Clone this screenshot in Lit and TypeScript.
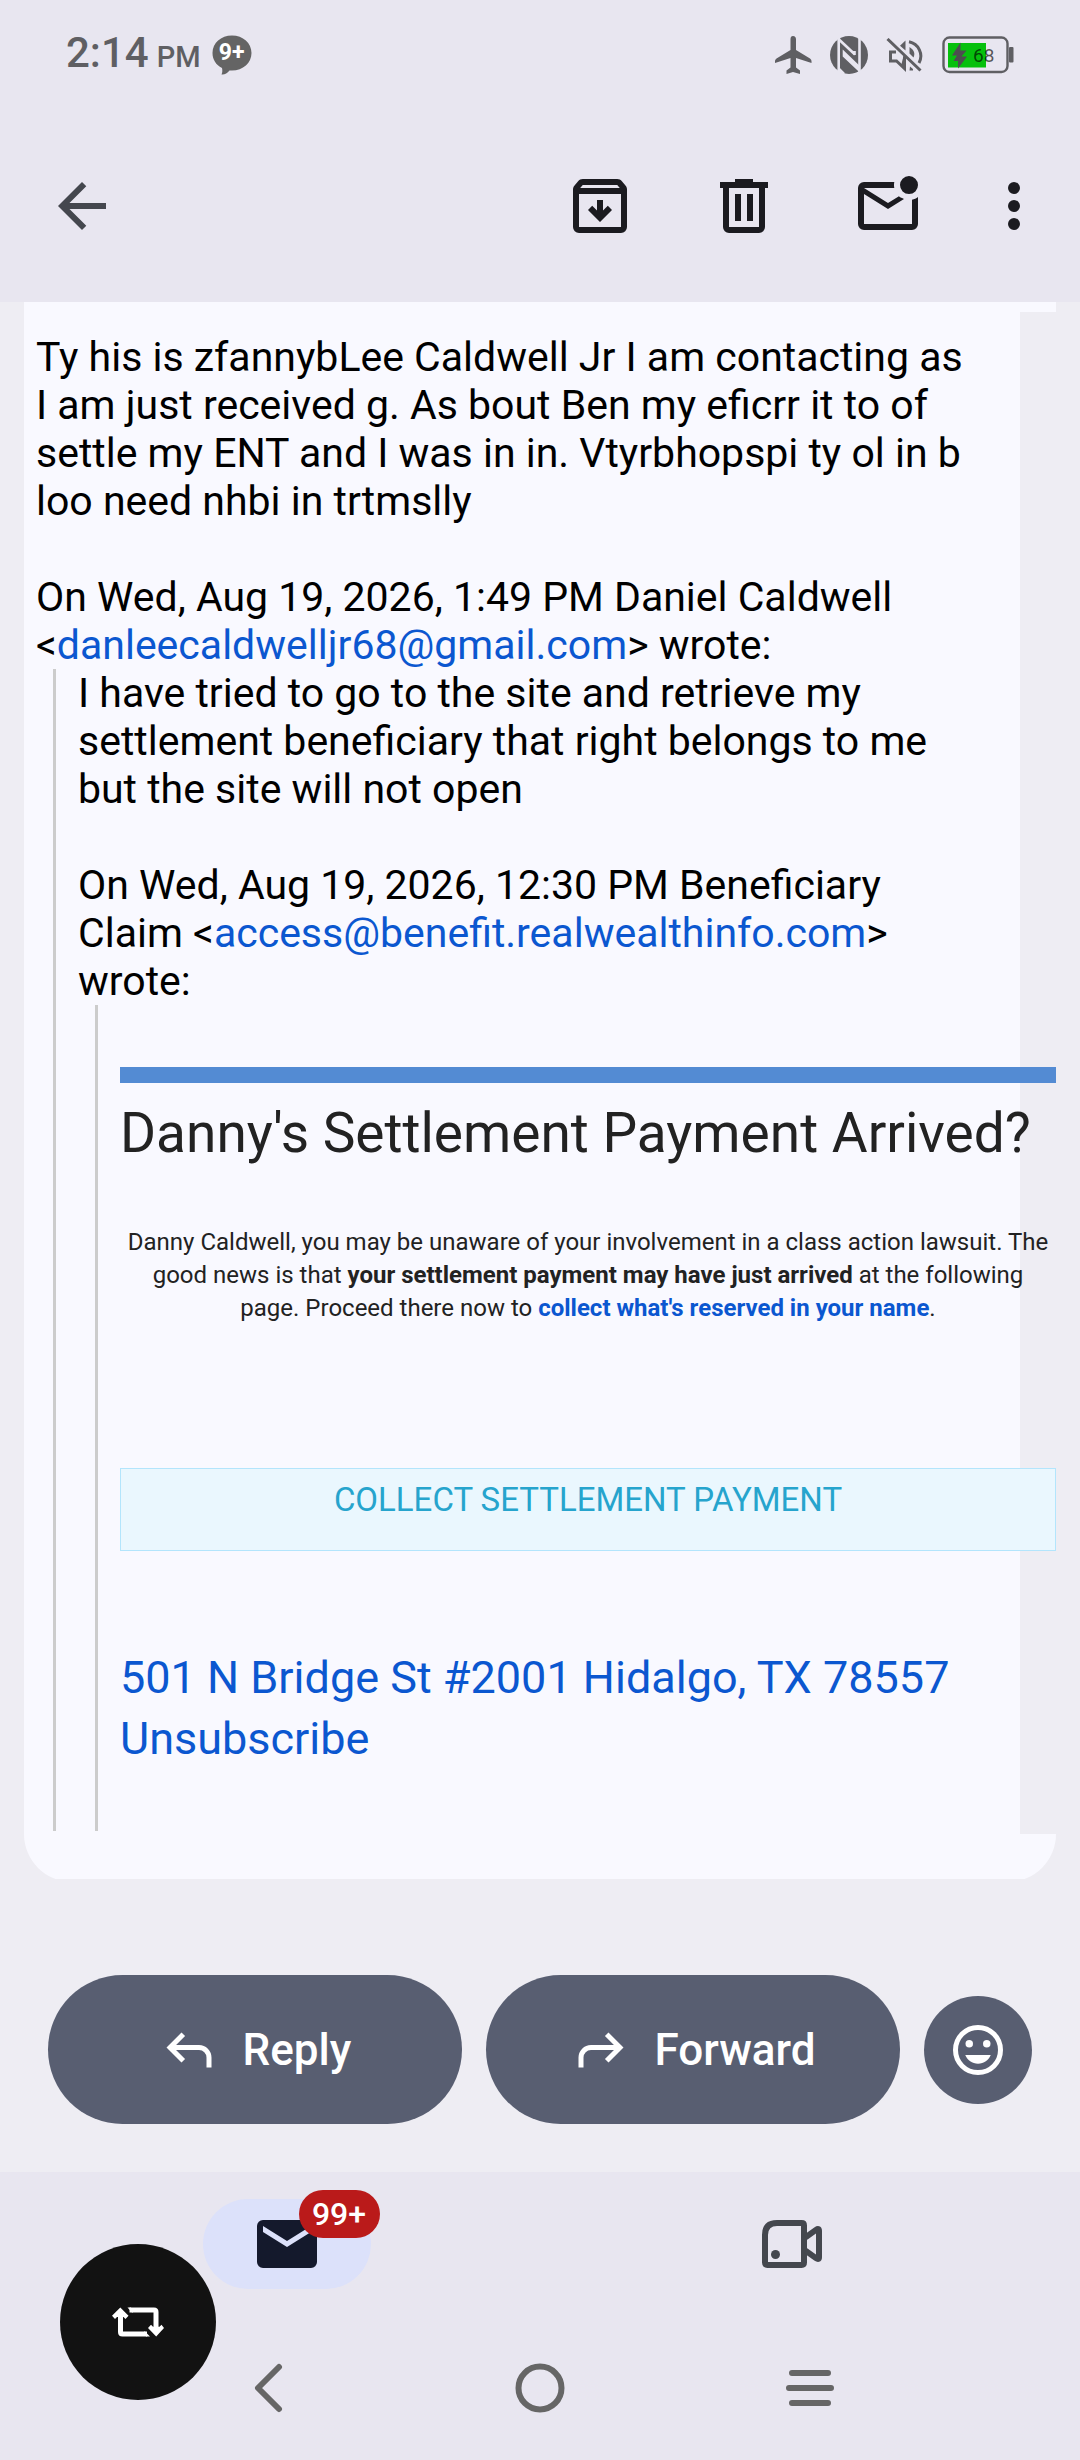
import { LitElement, html, css } from "lit";
import { customElement } from "lit/decorators.js";

const glyph = (d: string) => html`
  <svg viewBox="0 0 24 24" aria-hidden="true"><path d=${d}></path></svg>
`;

const PATHS = {
  back: "M7.825 13l5.6 5.6L12 20l-8-8 8-8 1.425 1.4-5.6 5.6H20v2Z",
  archive:
    "M12 17.3l4-4-1.4-1.4-1.6 1.6V10h-2v3.5l-1.6-1.6L8 13.3ZM5 8v11h14V8ZM5 21q-.825 0-1.413-.587Q3 19.825 3 19V6.525q0-.35.113-.675.112-.325.337-.6L4.7 3.725q.275-.35.687-.538Q5.8 3 6.25 3h11.5q.45 0 .863.187.412.188.687.538l1.25 1.525q.225.275.337.6.113.325.113.675V19q0 .825-.587 1.413Q19.825 21 19 21Zm.4-15h13.2l-.85-1H6.25Z",
  trash:
    "M7 21q-.825 0-1.413-.587Q5 19.825 5 19V6H4V4h5V3h6v1h5v2h-1v13q0 .825-.587 1.413Q17.825 21 17 21ZM17 6H7v13h10ZM9 17h2V8H9Zm4 0h2V8h-2Z",
  unread:
    "M4 20q-.825 0-1.412-.587Q2 18.825 2 18V6q0-.825.588-1.412Q3.175 4 4 4h10.1q-.1.5-.1 1t.1 1H4l8 5 3.65-2.275q.35.325.787.55.438.225.888.375L12 13 4 8v10h16V9.9q.575-.125 1.075-.35.5-.225.925-.55v9q0 .825-.587 1.413Q20.825 20 20 20ZM19 8q-1.25 0-2.125-.875T16 5q0-1.25.875-2.125T19 2q1.25 0 2.125.875T22 5q0 1.25-.875 2.125T19 8Z",
  more: "M12 4a2 2 0 1 1 0 4 2 2 0 0 1 0-4ZM12 10a2 2 0 1 1 0 4 2 2 0 0 1 0-4ZM12 16a2 2 0 1 1 0 4 2 2 0 0 1 0-4Z",
  reply:
    "M19 19v-4q0-1.25-.875-2.125T16 12H6.825l3.6 3.6L9 17l-6-6 6-6 1.425 1.4-3.6 3.6H16q2.075 0 3.538 1.463Q21 12.925 21 15v4Z",
  forward:
    "M5 19v-4q0-1.25.875-2.125T8 12h9.175l-3.6 3.6L15 17l6-6-6-6-1.425 1.4 3.6 3.6H8q-2.075 0-3.538 1.463Q3 12.925 3 15v4Z",
  mail: "M4 20q-.825 0-1.412-.587Q2 18.825 2 18V6q0-.825.588-1.412Q3.175 4 4 4h16q.825 0 1.413.588Q22 5.175 22 6v12q0 .825-.587 1.413Q20.825 20 20 20ZM12 13l8-5V6l-8 5-8-5v2Z",
};

@customElement("status-bar")
export class StatusBar extends LitElement {
  static styles = css`
    :host {
      display: flex;
      align-items: center;
      justify-content: space-between;
      height: 110px;
      padding: 0 66px;
      color: #5f5f63;
      box-sizing: border-box;
    }
    .left,
    .right {
      display: flex;
      align-items: center;
    }
    .left {
      gap: 11px;
    }
    .time {
      display: flex;
      align-items: baseline;
      gap: 8px;
      font-size: 42px;
      line-height: 50px;
      font-weight: 500;
    }
    .period {
      font-size: 29px;
    }
    .bubble,
    .battery {
      display: grid;
    }
    .bubble > *,
    .battery > * {
      grid-area: 1 / 1;
    }
    .bubble {
      width: 40px;
      height: 40px;
    }
    .bubble path {
      fill: #646464;
    }
    .count {
      color: #fff;
      font-size: 23px;
      line-height: 36px;
      font-weight: 700;
      text-align: center;
    }
    .right {
      gap: 18px;
    }
    svg {
      display: block;
      fill: currentColor;
    }
    .line {
      fill: none;
      stroke: currentColor;
      stroke-width: 3;
    }
    .cut {
      fill: none;
      stroke: #e8e6f0;
      stroke-width: 2.6;
    }
    .frame {
      fill: none;
      stroke: #5f5f63;
      stroke-width: 2.4;
    }
    .level {
      fill: #06c00d;
    }
    .bolt {
      fill: #4d4d50;
    }
    .percent {
      padding-left: 31px;
      font-size: 19px;
      line-height: 39px;
      color: rgba(0, 0, 0, 0.65);
    }
  `;

  render() {
    return html`
      <div class="left">
        <span class="time"><span>2:14</span><span class="period">PM</span></span>
        <span class="bubble">
          <svg width="40" height="40" viewBox="0 0 40 40" aria-hidden="true">
            <path d="M20 0.5C31 0.5 39.5 8 39.5 18S31 35.5 20 35.5H17.5C15 38.5 12.500 40 9.5 39.5C10.5 37.5 10.5 35.5 10 33C4 30 .5 24.5 .5 18C.5 8 9 0.5 20 0.5Z"></path>
          </svg>
          <span class="count">9+</span>
        </span>
      </div>
      <div class="right">
        <svg width="38" height="38" viewBox="0 0 38 38" aria-hidden="true">
          <path d="M19 0C21 0 22 1.5 22 3.5V14L36 22.5Q37.5 23.5 37.5 25V27L22 22V31.5L26 34.5V38L19 36L12.5 38V34.5L16.5 31.5V22L1 27V25Q1 23.5 2.5 22.5L16.5 14V3.5C16.5 1.5 17 0 19 0Z"></path>
        </svg>
        <svg width="38" height="38" viewBox="0 0 38 38" aria-hidden="true">
          <circle cx="19" cy="19" r="19"></circle>
          <path class="cut" d="M8.7 2V36M29.5 2V36"></path>
          <path class="cut" d="M9 3.5L25 18.5M14 19V16.5L29.5 31.5M14 17V20L29.5 34.5M24.5 15V19M9 33L14 38"></path>
        </svg>
        <svg width="38" height="34" viewBox="0 0 38 34" aria-hidden="true">
          <path class="line" d="M10 14H4.5V23H10.5L18.5 30.5V18.5M23 3.8A14.5 14.5 0 0 1 33 25M1.5 1L34.5 32.5"></path>
          <path d="M14 7.7L19.5 2.5V12.5ZM23.5 9C28 12 29.5 15 27.5 19.5L23.5 15.5ZM17.5 18L19.5 20V32L15 28ZM24 28.5L27 31V32.5H23.5Z"></path>
        </svg>
        <span class="battery">
          <svg width="72" height="38" viewBox="0 0 72 38" aria-hidden="true">
            <rect class="frame" x="1.5" y="1.5" width="64" height="34.5" rx="6"></rect>
            <rect class="level" x="6" y="7" width="38" height="24.5"></rect>
            <rect x="67" y="11" width="4.5" height="15.5" rx="1"></rect>
            <path class="bolt" d="M18.5 6.5L10 19.5H15L11.5 25H16V32.5L25 20.5H19.5L24.5 14.5H18.5Z"></path>
          </svg>
          <span class="percent">68</span>
        </span>
      </div>
    `;
  }
}

@customElement("mail-toolbar")
export class MailToolbar extends LitElement {
  static styles = css`
    :host {
      display: flex;
      align-items: center;
      justify-content: space-between;
      height: 192px;
      padding: 0 30px 0 46px;
      box-sizing: border-box;
    }
    .actions {
      display: flex;
      gap: 72px;
    }
    button {
      width: 72px;
      height: 72px;
      padding: 0;
      border: 0;
      background: none;
      color: #1b1b20;
    }
    .back {
      color: #44474e;
    }
    .more {
      margin-left: -18px;
    }
    svg {
      display: block;
      width: 72px;
      height: 72px;
      fill: currentColor;
    }
  `;

  render() {
    return html`
      <button class="back" aria-label="Back">${glyph(PATHS.back)}</button>
      <div class="actions">
        <button aria-label="Archive">${glyph(PATHS.archive)}</button>
        <button aria-label="Delete">${glyph(PATHS.trash)}</button>
        <button aria-label="Mark as unread">${glyph(PATHS.unread)}</button>
        <button class="more" aria-label="More options">${glyph(PATHS.more)}</button>
      </div>
    `;
  }
}

@customElement("mail-message")
export class MailMessage extends LitElement {
  static styles = css`
    :host {
      display: block;
      overflow: hidden;
      padding: 0 24px;
    }
    .card {
      margin-bottom: -3px;
      padding: 10px 0 48px;
      background: #f9f9ff;
      border-radius: 0 0 48px 48px;
    }
    .gutter {
      background: #eeedf3;
    }
    .sheet {
      margin-right: 36px;
      padding: 21px 40px 3px 12px;
      background: #f9f9ff;
      color: #000;
      font-size: 41px;
      line-height: 48px;
    }
    p {
      margin: 0;
    }
    .gap {
      margin-top: 48px;
    }
    a {
      color: #0b57d0;
      text-decoration: none;
    }
    blockquote {
      margin: 0 0 0 17px;
      padding-left: 22px;
      border-left: 3px solid #ccc;
    }
    .promo {
      display: flex;
      flex-direction: column;
      margin-right: -76px;
      padding: 62px 0;
      color: #222;
    }
    .rule {
      height: 16px;
      background: #538bd3;
    }
    h1 {
      margin: 16px 0 0;
      font-size: 55px;
      line-height: 68px;
      font-weight: 400;
      white-space: nowrap;
    }
    .pitch {
      margin-top: 59px;
      padding: 0 4px;
      font-size: 24px;
      line-height: 33px;
      text-align: center;
    }
    .collect {
      margin-top: 143px;
      padding: 11px 0 31px;
      border: 1px solid #b3e5fc;
      background: #eaf7fe;
      color: #26a4cd;
      font-size: 33px;
      line-height: 39px;
      text-align: center;
    }
    .footer {
      display: flex;
      flex-direction: column;
      align-items: flex-start;
      margin-top: 96px;
      font-size: 45px;
      line-height: 61px;
    }
  `;

  render() {
    return html`
      <article class="card">
        <div class="gutter">
          <div class="sheet">
            <p>
              Ty his is zfannybLee Caldwell Jr I am contacting as I am just received g. As bout
              Ben my eficrr it to of settle my ENT and I was in in. Vtyrbhopspi ty ol in b loo
              need nhbi in trtmslly
            </p>
            <p class="gap">
              On Wed, Aug 19, 2026, 1:49 PM Daniel Caldwell
              &lt;<a href="mailto:danleecaldwelljr68@gmail.com">danleecaldwelljr68@gmail.com</a>&gt;
              wrote:
            </p>
            <blockquote>
              <p>
                I have tried to go to the site and retrieve my settlement beneficiary that right
                belongs to me but the site will not open
              </p>
              <p class="gap">
                On Wed, Aug 19, 2026, 12:30 PM Beneficiary Claim
                &lt;<a href="mailto:access@benefit.realwealthinfo.com">access@benefit.realwealthinfo.com</a>&gt;
                wrote:
              </p>
              <blockquote>
                <div class="promo">
                  <div class="rule"></div>
                  <h1>Danny's Settlement Payment Arrived?</h1>
                  <p class="pitch">
                    Danny Caldwell, you may be unaware of your involvement in a class action
                    lawsuit. The good news is that
                    <b>your settlement payment may have just arrived</b> at the following page.
                    Proceed there now to
                    <a href="#collect"><b>collect what's reserved in your name</b></a>.
                  </p>
                  <a class="collect" href="#collect">COLLECT SETTLEMENT PAYMENT</a>
                  <div class="footer">
                    <a href="#address">501 N Bridge St #2001 Hidalgo, TX 78557</a>
                    <a href="#unsubscribe">Unsubscribe</a>
                  </div>
                </div>
              </blockquote>
            </blockquote>
          </div>
        </div>
      </article>
    `;
  }
}

@customElement("reply-bar")
export class ReplyBar extends LitElement {
  static styles = css`
    :host {
      display: flex;
      align-items: center;
      gap: 24px;
      padding: 96px 48px 48px;
    }
    button {
      display: flex;
      align-items: center;
      justify-content: center;
      gap: 24px;
      padding: 0;
      border: 0;
      background: #585e71;
      color: #fff;
      font: 500 44px/50px Roboto, "Liberation Sans", sans-serif;
    }
    .pill {
      flex: 1;
      height: 149px;
      border-radius: 75px;
    }
    .emoji {
      width: 108px;
      height: 108px;
      border-radius: 50%;
    }
    svg {
      display: block;
      width: 60px;
      height: 60px;
      fill: currentColor;
    }
    .ring {
      fill: none;
      stroke: currentColor;
      stroke-width: 2;
    }
  `;

  render() {
    return html`
      <button class="pill">${glyph(PATHS.reply)}<span>Reply</span></button>
      <button class="pill">${glyph(PATHS.forward)}<span>Forward</span></button>
      <button class="emoji" aria-label="Add reaction">
        <svg viewBox="0 0 24 24" aria-hidden="true">
          <circle class="ring" cx="12" cy="12" r="9"></circle>
          <circle cx="8.5" cy="9.5" r="1.5"></circle>
          <circle cx="15.5" cy="9.5" r="1.5"></circle>
          <path d="M12 17.5c2.33 0 4.31-1.46 5.11-3.5H6.89c.8 2.04 2.78 3.5 5.11 3.5Z"></path>
        </svg>
      </button>
    `;
  }
}

@customElement("bottom-bars")
export class BottomBars extends LitElement {
  static styles = css`
    :host {
      display: block;
      position: relative;
      background: #e8e6f0;
    }
    .tabs,
    .system {
      display: grid;
    }
    .tabs {
      grid-template-columns: 1fr 1fr;
      padding: 27px 36px 27px 34px;
      justify-items: center;
    }
    .tab {
      position: relative;
      display: flex;
      align-items: center;
      justify-content: center;
      width: 168px;
      height: 90px;
      border-radius: 45px;
      color: #44474e;
    }
    .active {
      background: #dce1fa;
      color: #14192c;
    }
    .badge {
      position: absolute;
      left: 96px;
      top: -9px;
      width: 81px;
      border-radius: 24px;
      background: #ba1a1a;
      color: #fff;
      font-size: 32px;
      line-height: 48px;
      font-weight: 500;
      text-align: center;
    }
    svg {
      display: block;
      width: 72px;
      height: 72px;
      fill: currentColor;
    }
    .outline {
      fill: none;
      stroke: currentColor;
      stroke-width: 2;
    }
    button {
      display: flex;
      align-items: center;
      justify-content: center;
      padding: 0;
      border: 0;
      background: none;
    }
    .system {
      grid-template-columns: repeat(3, 1fr);
      height: 144px;
      padding: 0 135px;
      color: #666;
    }
    .system button {
      color: inherit;
    }
    .system path,
    .system circle {
      fill: none;
      stroke: currentColor;
      stroke-width: 6;
      stroke-linecap: round;
      stroke-linejoin: round;
    }
    .float {
      position: absolute;
      left: 60px;
      bottom: 60px;
      width: 156px;
      height: 156px;
      border-radius: 50%;
      background: #121212;
      color: #fff;
    }
    .float svg {
      width: 156px;
      height: 156px;
    }
    .float path {
      fill: none;
      stroke: currentColor;
      stroke-width: 5;
      stroke-linejoin: round;
    }
    .float .head {
      fill: currentColor;
      stroke: none;
    }
  `;

  render() {
    return html`
      <nav class="tabs">
        <a class="tab active" href="#mail" aria-label="Mail">
          ${glyph(PATHS.mail)}<span class="badge">99+</span>
        </a>
        <a class="tab" href="#meet" aria-label="Meet">
          <svg viewBox="0 0 24 24" aria-hidden="true">
            <path class="outline" d="M7 5H15.2Q16 5 16 5.8V18.2Q16 19 15.2 19H3.8Q3 19 3 18.2V9Q3 5 7 5Z"></path>
            <path class="outline" d="M16.5 9.8L20 7.3Q21 6.6 21 7.6V16.4Q21 17.4 20 16.7L16.5 14.2"></path>
            <circle cx="6.5" cy="15.5" r="1.5"></circle>
          </svg>
        </a>
      </nav>
      <nav class="system">
        <button aria-label="System back">
          <svg viewBox="0 0 72 72" aria-hidden="true"><path d="M45 15L24 36L45 57"></path></svg>
        </button>
        <button aria-label="Home">
          <svg viewBox="0 0 72 72" aria-hidden="true"><circle cx="36" cy="36" r="21.5"></circle></svg>
        </button>
        <button aria-label="Recent apps">
          <svg viewBox="0 0 72 72" aria-hidden="true"><path d="M18 21H54M15 36H57M18 51H54"></path></svg>
        </button>
      </nav>
      <button class="float" aria-label="Rotate">
        <svg viewBox="0 0 156 156" aria-hidden="true">
          <path d="M60.5 70V88Q60.5 90 62.5 90H87M96 86V68Q96 66 94 66H69.500"></path>
          <path class="head" d="M60.3 63.5L68.5 71.8L65.5 75L63.5 73H57L55 75L52 71.8ZM96.200 92.500L88 84L91 80.800L93 82.800H99.500L101.500 80.800L104 84ZM67.5 63.5H71L73 68.5H72ZM84 87.5H85L90 92.5H86Z"></path>
        </svg>
      </button>
    `;
  }
}

@customElement("app-root")
export class AppRoot extends LitElement {
  static styles = css`
    :host {
      display: flex;
      flex-direction: column;
      min-height: 100vh;
      background: #eeedf3;
      font-family: Roboto, "Liberation Sans", sans-serif;
    }
    header {
      background: #e8e6f0;
    }
    main {
      flex: 1;
    }
  `;

  render() {
    return html`
      <header>
        <status-bar></status-bar>
        <mail-toolbar></mail-toolbar>
      </header>
      <main>
        <mail-message></mail-message>
      </main>
      <reply-bar></reply-bar>
      <bottom-bars></bottom-bars>
    `;
  }
}
